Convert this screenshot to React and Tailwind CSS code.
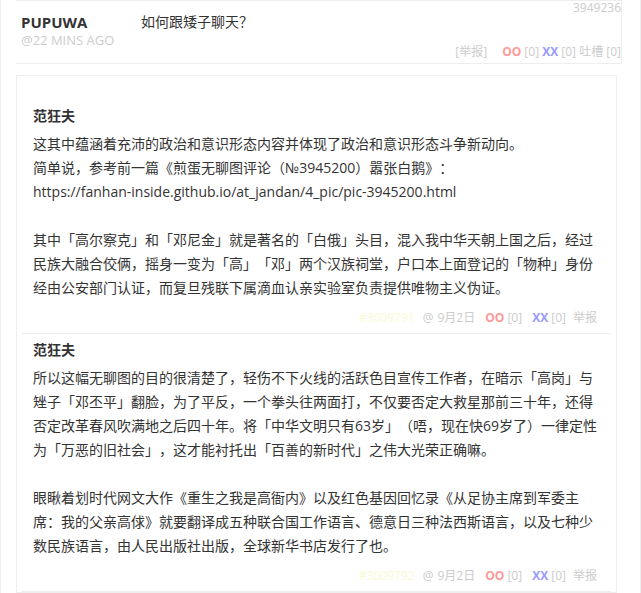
import React from 'react';

const comments = [
  {
    id: '#3009791',
    author: '范狂夫',
    date: '9月2日',
    paras: [
      [
        '这其中蕴涵着充沛的政治和意识形态内容并体现了政治和意识形态斗争新动向。',
        '简单说，参考前一篇《煎蛋无聊图评论（№3945200）嚣张白鹅》：',
        'https://fanhan-inside.github.io/at_jandan/4_pic/pic-3945200.html',
      ],
      [
        '其中「高尔察克」和「邓尼金」就是著名的「白俄」头目，混入我中华天朝上国之后，经过民族大融合佼俩，摇身一变为「高」「邓」两个汉族祠堂，户口本上面登记的「物种」身份经由公安部门认证，而复旦残联下属滴血认亲实验室负责提供唯物主义伪证。',
      ],
    ],
  },
  {
    id: '#3009792',
    author: '范狂夫',
    date: '9月2日',
    paras: [
      [
        '所以这幅无聊图的目的很清楚了，轻伤不下火线的活跃色目宣传工作者，在暗示「高岗」与矬子「邓丕平」翻脸，为了平反，一个拳头往两面打，不仅要否定大救星那前三十年，还得否定改革春风吹满地之后四十年。将「中华文明只有63岁」（唔，现在快69岁了）一律定性为「万恶的旧社会」，这才能衬托出「百善的新时代」之伟大光荣正确嘛。',
      ],
      [
        '眼瞅着划时代网文大作《重生之我是高衙内》以及红色基因回忆录《从足协主席到军委主席：我的父亲高俅》就要翻译成五种联合国工作语言、德意日三种法西斯语言，以及七种少数民族语言，由人民出版社出版，全球新华书店发行了也。',
      ],
    ],
  },
];

const Comment = ({ c }) => (
  <div className="border-b border-[#eee] px-[11px] pt-[4px] pb-[3px]">
    <div className="text-[14px] leading-[24px] font-bold text-[#333]">{c.author}</div>
    <div className="mt-[4px] text-[14px] leading-[24px] text-[#333]">
      {c.paras.map((p, i) => (
        <React.Fragment key={i}>
          {i > 0 && <br />}
          {p.map((line, j) => (
            <React.Fragment key={j}>
              {line}
              <br />
            </React.Fragment>
          ))}
        </React.Fragment>
      ))}
    </div>
    <div className="mt-[6px] pr-[3px] text-right text-[12px] leading-[24px] text-[#ccc]">
      <span className="mr-[8px] text-[#fafad2]">{c.id}</span>
      <span className="mr-[4px]">@</span>
      <span>{c.date}</span>
      <span className="ml-[10px] font-bold text-[#f99]">OO</span> [0]
      <span className="ml-[10px] font-bold text-[#99f]">XX</span> [0]
      <span className="ml-[7px]">举报</span>
    </div>
  </div>
);

export default function App() {
  return (
    <div className="min-h-[593px] w-[641px] border-l border-r border-[#eee] bg-white font-['Open_Sans','Noto_Sans_CJK_SC',sans-serif] text-[#333] [text-spacing-trim:space-all]">
      <div className="ml-[15px] w-[606px]">
        {/* post header */}
        <div className="border-t border-r border-b border-[#eee] pl-[5px] pb-[3px]">
          <div className="text-right text-[12px] leading-[13px] text-[#ccc]">3949236</div>
          <div className="flex">
            <div className="w-[120px]">
              <div className="text-[15px] leading-[16px] font-bold text-[#333]">PUPUWA</div>
              <div className="mt-[2px] text-[13px] leading-[16px] text-[#ccc]">@22 MINS AGO</div>
            </div>
            <div className="flex-1">
              <div className="text-[14px] leading-[16px] text-[#333]">如何跟矮子聊天？</div>
              <div className="mt-[14px] text-right text-[12px] leading-[16px] text-[#ccc]">
                <span className="mr-[15px]">[举报]</span>
                <span className="font-bold text-[#f99]">OO</span> [0]{' '}
                <span className="font-bold text-[#99f]">XX</span> [0] 吐槽 [0]
              </div>
            </div>
          </div>
        </div>

        {/* comments */}
        <div className="mt-[11px] w-[601px] border border-[#eee] px-[5px] pt-[24px]">
          {comments.map((c) => (
            <Comment key={c.id} c={c} />
          ))}
        </div>
      </div>
    </div>
  );
}
